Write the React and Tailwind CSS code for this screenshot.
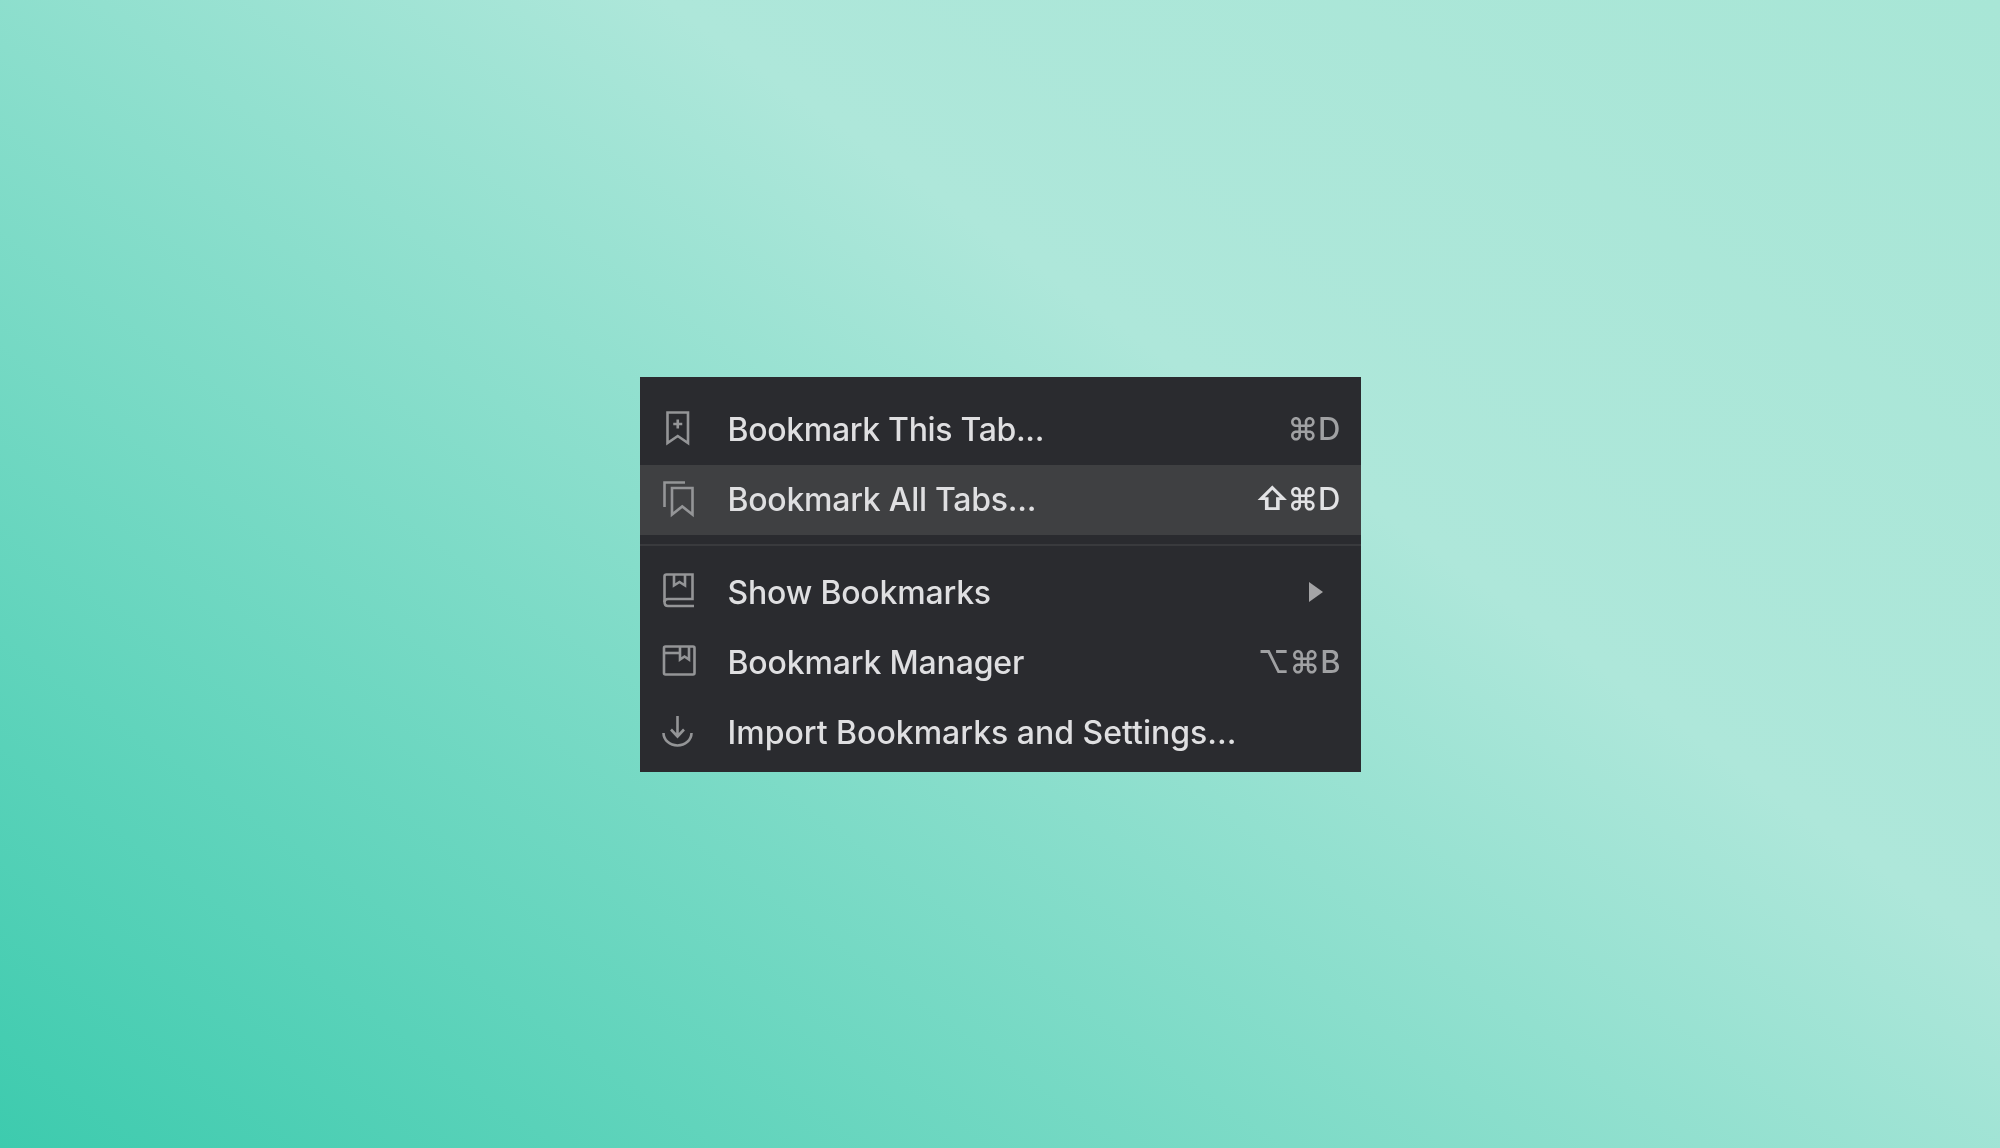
import React from 'react';

// menu row data
const items = [
  { label: 'Bookmark This Tab...', icon: 'add', keys: '⌘D', spacing: 'tracking-[-0.32px]' },
  { label: 'Bookmark All Tabs...', icon: 'all', shift: true, keys: '⌘D', active: true, spacing: 'tracking-[-0.25px]' },
  { divider: true },
  { label: 'Show Bookmarks', icon: 'book', submenu: true, spacing: 'tracking-[-0.18px]' },
  { label: 'Bookmark Manager', icon: 'manager', keys: '⌥⌘B', spacing: 'tracking-[-0.16px]' },
  { label: 'Import Bookmarks and Settings...', icon: 'import', spacing: 'tracking-normal' },
];

function MenuIcon({ name }) {
  return (
    <svg
      viewBox="0 0 40 40"
      fill="none"
      stroke="#949597"
      strokeWidth="2.6"
      className="w-10 h-10 shrink-0 -mt-[3px]"
    >
      {name === 'add' && (
        <>
          <path d="M9.5 4.5H30V35L19.75 28L9.5 35Z" />
          <path d="M19.75 11.5V20.5M15.25 16H24.25" />
        </>
      )}
      {name === 'all' && (
        <>
          <path d="M27 4.5H6.5V29" />
          <path d="M14 10H34.5V36.5L24.25 28.5L14 36.5Z" />
        </>
      )}
      {name === 'book' && (
        <>
          <path d="M10 28H34.5V3.5H8.5C7.2 3.5 6.5 4.2 6.5 5.5V31C6.5 33.5 8 35 10 35H36" />
          <path d="M6.5 31C6.5 29 8 28 10 28" />
          <path d="M16 4V14.5L21.5 11L27 14.5V4" />
        </>
      )}
      {name === 'manager' && (
        <>
          <path d="M7.5 5.5H35C35.8 5.5 36.5 6.2 36.5 7V32C36.5 32.8 35.8 33.5 35 33.5H7.5C6.7 33.5 6 32.8 6 32V7C6 6.2 6.7 5.5 7.5 5.5Z" />
          <path d="M6 12H22" />
          <path d="M22 6V18.5L26.5 15.5L31 18.5V6" />
        </>
      )}
      {name === 'import' && (
        <>
          <path d="M19.5 5V25M13 18.5L19.5 25.5L26 18.5" />
          <path d="M5.5 22A14 12.5 0 0 0 33.5 22" />
        </>
      )}
    </svg>
  );
}

function MenuRow({ item }) {
  return (
    <div className={`flex items-center h-[70px] pl-[18px] pr-5 ${item.active ? 'bg-[#3f4042]' : ''}`}>
      <MenuIcon name={item.icon} />
      <span className={`ml-[30px] flex-1 text-[32px] font-medium text-[#dfdfe1] whitespace-nowrap ${item.spacing}`}>
        {item.label}
      </span>
      {item.keys && (
        <span className={`text-[31px] font-medium whitespace-nowrap ${item.active ? 'text-[#e2e2e4]' : 'text-[#a0a1a3]'}`}>
          {item.shift && <span className="font-bold -mr-[2px]">⇧</span>}
          {item.keys}
        </span>
      )}
      {item.submenu && (
        <svg viewBox="0 0 14 20" className="w-[14px] h-5 mr-[18px] -mt-[2px]">
          <polygon points="0,0 14,10 0,20" fill="#a4a4a6" />
        </svg>
      )}
    </div>
  );
}

export default function App() {
  return (
    <div
      className="min-h-screen flex items-center justify-center bg-[linear-gradient(215.5deg,#a8e6d6_0%,#aee7da_37%,#3dcbae_100%)]"
      style={{ fontFamily: 'Inter, "DejaVu Sans", sans-serif' }}
    >
      <div className="w-[721px] h-[395px] pt-[18px] bg-[#2a2b2f] flex flex-col blur-[0.5px]">
        {items.map((item, i) =>
          item.divider ? (
            <div key={i} className="h-[23px] flex items-center">
              <div className="w-full h-[2px] mb-[2px] bg-[#393a3d]" />
            </div>
          ) : (
            <MenuRow key={i} item={item} />
          )
        )}
      </div>
    </div>
  );
}
